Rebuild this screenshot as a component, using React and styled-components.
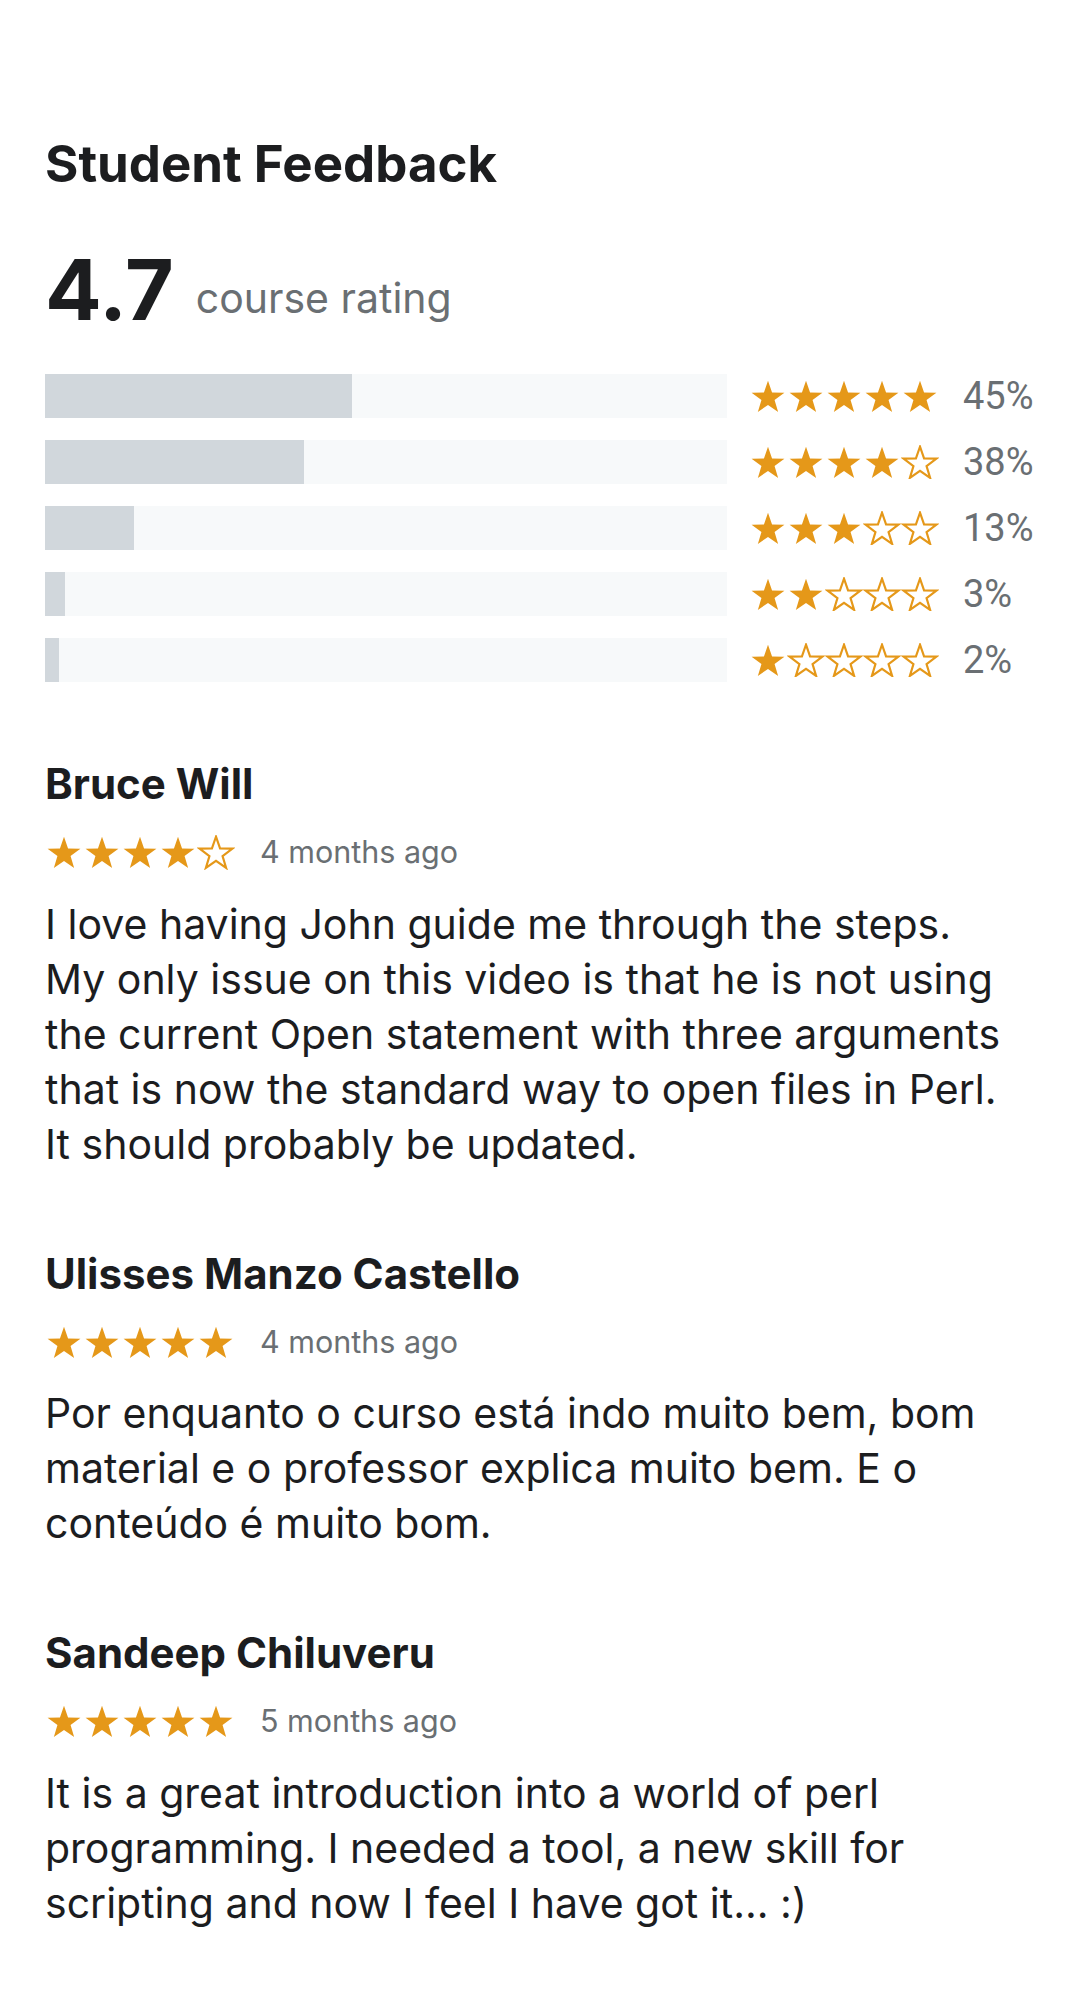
import React from 'react';
import styled, { createGlobalStyle } from 'styled-components';

const distribution = [
  { stars: 5, percent: 45 },
  { stars: 4, percent: 38 },
  { stars: 3, percent: 13 },
  { stars: 2, percent: 3 },
  { stars: 1, percent: 2 },
];

const reviews = [
  {
    name: 'Bruce Will',
    rating: 4,
    date: '4 months ago',
    text: 'I love having John guide me through the steps. My only issue on this video is that he is not using the current Open statement with three arguments that is now the standard way to open files in Perl. It should probably be updated.',
  },
  {
    name: 'Ulisses Manzo Castello',
    rating: 5,
    date: '4 months ago',
    text: 'Por enquanto o curso está indo muito bem, bom material e o professor explica muito bem. E o conteúdo é muito bom.',
  },
  {
    name: 'Sandeep Chiluveru',
    rating: 5,
    date: '5 months ago',
    text: 'It is a great introduction into a world of perl programming. I needed a tool, a new skill for scripting and now I feel I have got it... :)',
  },
];

const STAR_POINTS =
  '10,0 12.35,6.76 19.51,6.91 13.8,11.24 15.88,18.09 10,14 4.12,18.09 6.2,11.24 0.49,6.91 7.65,6.76';

function Star({ filled }) {
  return (
    <StarSvg viewBox="-1 -1 22 20" aria-hidden="true">
      <polygon
        points={STAR_POINTS}
        fill={filled ? '#e59819' : 'none'}
        stroke={filled ? 'none' : '#e59819'}
        strokeWidth="1.25"
        strokeLinejoin="miter"
      />
    </StarSvg>
  );
}

function StarRating({ value }) {
  return (
    <StarRow aria-label={`Rating: ${value} out of 5`}>
      {[1, 2, 3, 4, 5].map((n) => (
        <Star key={n} filled={n <= value} />
      ))}
    </StarRow>
  );
}

export default function App() {
  return (
    <>
      <GlobalStyle />
      <Page>
        <Title>Student Feedback</Title>

        <Summary>
          <Score>4.7</Score>
          <ScoreLabel>course rating</ScoreLabel>
        </Summary>

        <Distribution>
          {distribution.map((row) => (
            <DistRow key={row.stars}>
              <Track>
                <Fill style={{ width: `${row.percent}%` }} />
              </Track>
              <StarRating value={row.stars} />
              <Percent>{row.percent}%</Percent>
            </DistRow>
          ))}
        </Distribution>

        <ReviewList>
          {reviews.map((review) => (
            <Review key={review.name}>
              <ReviewerName>{review.name}</ReviewerName>
              <ReviewMeta>
                <StarRating value={review.rating} />
                <ReviewDate>{review.date}</ReviewDate>
              </ReviewMeta>
              <ReviewText>{review.text}</ReviewText>
            </Review>
          ))}
        </ReviewList>
      </Page>
    </>
  );
}

const GlobalStyle = createGlobalStyle`
  * {
    box-sizing: border-box;
  }

  body {
    margin: 0;
    background: #ffffff;
    color: #1c1d1f;
    font-family: "Inter", "Liberation Sans", sans-serif;
  }
`;

const Page = styled.div`
  width: 1080px;
  min-height: 1996px;
  padding: 134px 45px 80px;
`;

const Title = styled.h2`
  margin: 0;
  font-size: 51px;
  line-height: 60px;
  font-weight: 700;
  color: #1c1d1f;
`;

const Summary = styled.div`
  display: flex;
  align-items: flex-end;
  gap: 22px;
  margin-top: 54px;
`;

const Score = styled.span`
  font-size: 84px;
  line-height: 1;
  font-weight: 700;
  color: #1c1d1f;
`;

const ScoreLabel = styled.span`
  font-size: 41px;
  line-height: 1;
  color: #6a6f73;
  margin-bottom: 13px;
`;

const Distribution = styled.div`
  display: flex;
  flex-direction: column;
  gap: 22px;
  margin-top: 42px;
`;

const DistRow = styled.div`
  display: flex;
  align-items: center;
  gap: 22px;
`;

const Track = styled.div`
  flex: 1;
  height: 44px;
  background: #f7f9fa;
`;

const Fill = styled.div`
  height: 100%;
  background: #d1d7dc;
`;

const StarRow = styled.div`
  display: flex;
  flex-shrink: 0;
`;

const StarSvg = styled.svg`
  display: block;
  width: 38px;
  height: 34.5px;
`;

const Percent = styled.span`
  width: 72px;
  margin-left: 2px;
  font-family: Roboto, "Liberation Sans", sans-serif;
  font-size: 38px;
  line-height: 1;
  color: #6a6f73;
`;

const ReviewList = styled.div`
  display: flex;
  flex-direction: column;
  gap: 77px;
  margin-top: 77px;
`;

const Review = styled.article`
  display: flex;
  flex-direction: column;
`;

const ReviewerName = styled.h3`
  margin: 0;
  font-size: 42px;
  line-height: 50px;
  font-weight: 700;
  color: #1c1d1f;
`;

const ReviewMeta = styled.div`
  display: flex;
  align-items: center;
  gap: 25px;
  margin-top: 26px;
`;

const ReviewDate = styled.span`
  font-size: 30.5px;
  line-height: 1;
  color: #6a6f73;
`;

const ReviewText = styled.p`
  max-width: 966px;
  margin: 27px 0 0;
  font-size: 41px;
  line-height: 55px;
  color: #1c1d1f;
`;
